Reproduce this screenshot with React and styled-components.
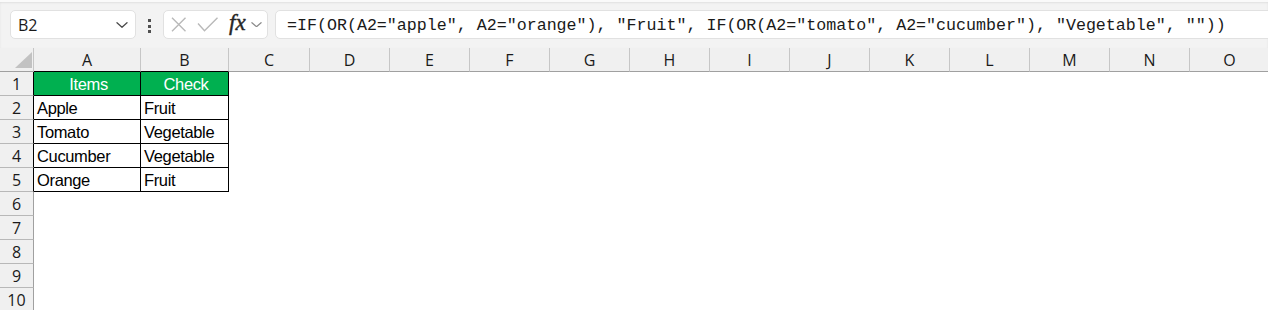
import React from 'react';
import styled, { createGlobalStyle } from 'styled-components';

const GlobalStyle = createGlobalStyle`
    html, body {
        margin: 0;
        padding: 0;
        background: #ffffff;
        overflow: hidden;
    }
`;

const Sheet = styled.div`
    width: 1268px;
    height: 310px;
    overflow: hidden;
    background: #ffffff;
`;

const Toolbar = styled.div`
    position: relative;
    height: 48px;
    box-sizing: border-box;
    padding: 10px 0 0 10px;
    display: flex;
    align-items: flex-start;
    background: #f3f3f3;
    border-top: 2px solid #fafafa;
    box-shadow: inset 0 1px 2px rgba(0, 0, 0, 0.08);
`;

const NameBox = styled.div`
    width: 126px;
    height: 29px;
    margin-top: -2px;
    box-sizing: border-box;
    background: #ffffff;
    border: 1px solid #e1e1e1;
    border-radius: 5px;
    display: flex;
    align-items: center;
    justify-content: space-between;
    padding: 0 7px 0 7px;
    font-family: 'Open Sans', 'Liberation Sans', sans-serif;
    font-size: 16px;
    color: #1a1a1a;
`;

const Dots = styled.div`
    width: 4px;
    margin: 7px 11px 0 11px;
    display: flex;
    flex-direction: column;
    gap: 2.5px;
    align-items: center;
`;

const Dot = styled.span`
    width: 3px;
    height: 3px;
    background: #505050;
`;

const FxBox = styled.div`
    width: 105px;
    height: 29px;
    margin-top: -2px;
    margin-left: 1px;
    box-sizing: border-box;
    background: #ffffff;
    border: 1px solid #e1e1e1;
    border-radius: 5px;
    display: flex;
    align-items: center;
    padding-left: 7px;
`;

const FxLabel = styled.span`
    font-family: 'Liberation Serif', 'DejaVu Serif', serif;
    font-style: italic;
    font-size: 23px;
    color: #262626;
    margin: -4px 5px 0 10px;
    -webkit-text-stroke: 0.4px #262626;
`;

const FormulaBox = styled.div`
    flex: 1;
    height: 29px;
    margin: -2px -12px 0 7px;
    box-sizing: border-box;
    background: #ffffff;
    border: 1px solid #e1e1e1;
    border-radius: 5px;
    display: flex;
    align-items: center;
    padding: 1px 0 0 11px;
    font-family: 'Liberation Mono', 'DejaVu Sans Mono', monospace;
    font-size: 16.65px;
    color: #1a1a1a;
    white-space: pre;
`;

const Grid = styled.div`
    display: grid;
    grid-template-columns: 34px 107px 88px 81px repeat(12, 80px);
    grid-auto-rows: 24px;
`;

const Corner = styled.div`
    background: #f0f0f0;
    border-right: 1px solid #c6c6c6;
    border-bottom: 1px solid #a0a0a0;
    box-sizing: border-box;
    display: flex;
    align-items: flex-end;
    justify-content: flex-end;
    padding: 0 1px 3px 0;
`;

const CornerMark = styled.div`
    width: 0;
    height: 0;
    border-left: 17px solid transparent;
    border-bottom: 16px solid #c2c2c2;
`;

const ColHead = styled.div`
    background: #f0f0f0;
    border-right: 1px solid #c6c6c6;
    border-bottom: 1px solid ${p => (p.$edge ? '#000000' : '#a0a0a0')};
    box-sizing: border-box;
    display: flex;
    align-items: center;
    justify-content: center;
    font-family: 'Open Sans', 'Liberation Sans', sans-serif;
    font-size: 16px;
    color: #1a1a1a;
    padding-top: 1px;
`;

const RowHead = styled.div`
    background: #f0f0f0;
    border-right: 1px solid ${p => (p.$edge ? '#000000' : '#a0a0a0')};
    border-bottom: 1px solid #b8b8b8;
    box-sizing: border-box;
    display: flex;
    align-items: center;
    justify-content: center;
    font-family: 'Open Sans', 'Liberation Sans', sans-serif;
    font-size: 16px;
    color: #1a1a1a;
    padding-top: 1px;
`;

const Cell = styled.div`
    box-sizing: border-box;
    border-right: 1px solid ${p => (p.$boxed ? '#000000' : 'transparent')};
    border-bottom: 1px solid ${p => (p.$boxed ? '#000000' : 'transparent')};
    background: ${p => (p.$head ? '#00b050' : '#ffffff')};
    color: ${p => (p.$head ? '#ffffff' : '#000000')};
    text-align: ${p => (p.$head ? 'center' : 'left')};
    padding: 1px 0 0 3px;
    font-family: 'Liberation Sans', Arial, sans-serif;
    font-size: 16.5px;
    letter-spacing: -0.35px;
    line-height: 22px;
    white-space: nowrap;
    overflow: hidden;
`;

const Chevron = ({ size = 12, color = '#4a4a4a' }) => (
    <svg width={size} height={size * 0.5} viewBox="0 0 12 6" fill="none">
        <path d="M1 0.8 L6 5.2 L11 0.8" stroke={color} strokeWidth="1.3" strokeLinecap="round" strokeLinejoin="round" />
    </svg>
);

const CancelIcon = () => (
    <svg width="16" height="15" viewBox="0 0 16 15" fill="none">
        <path d="M1 0.8 L14.5 14.2 M14.5 0.8 L1 14.2" stroke="#b9b9b9" strokeWidth="1.4" />
    </svg>
);

const EnterIcon = () => (
    <svg width="22" height="15" viewBox="0 0 22 15" fill="none" style={{ marginLeft: 10 }}>
        <path d="M1 6.5 L7.5 13.8 L20.5 0.8" stroke="#b9b9b9" strokeWidth="1.4" />
    </svg>
);

const columns = ['A', 'B', 'C', 'D', 'E', 'F', 'G', 'H', 'I', 'J', 'K', 'L', 'M', 'N', 'O'];

const tableRows = [
    ['Items', 'Check'],
    ['Apple', 'Fruit'],
    ['Tomato', 'Vegetable'],
    ['Cucumber', 'Vegetable'],
    ['Orange', 'Fruit'],
];

const formula = '=IF(OR(A2="apple", A2="orange"), "Fruit", IF(OR(A2="tomato", A2="cucumber"), "Vegetable", ""))';

export default function App() {
    const rows = [];
    for (let r = 1; r <= 10; r++) {
        const data = tableRows[r - 1];
        rows.push(<RowHead key={'h' + r} $edge={!!data}>{r}</RowHead>);
        columns.forEach((c, i) => {
            const boxed = !!data && i < 2;
            rows.push(
                <Cell key={c + r} $boxed={boxed} $head={boxed && r === 1}>
                    {boxed ? data[i] : ''}
                </Cell>
            );
        });
    }

    return (
        <Sheet>
            <GlobalStyle />
            <Toolbar>
                <NameBox>
                    <span>B2</span>
                    <Chevron />
                </NameBox>
                <Dots>
                    <Dot />
                    <Dot />
                    <Dot />
                </Dots>
                <FxBox>
                    <CancelIcon />
                    <EnterIcon />
                    <FxLabel>fx</FxLabel>
                    <Chevron size={11} color="#8a8a8a" />
                </FxBox>
                <FormulaBox>{formula}</FormulaBox>
            </Toolbar>
            <Grid>
                <Corner>
                    <CornerMark />
                </Corner>
                {columns.map((c, i) => (
                    <ColHead key={c} $edge={i < 2}>{c}</ColHead>
                ))}
                {rows}
            </Grid>
        </Sheet>
    );
}
